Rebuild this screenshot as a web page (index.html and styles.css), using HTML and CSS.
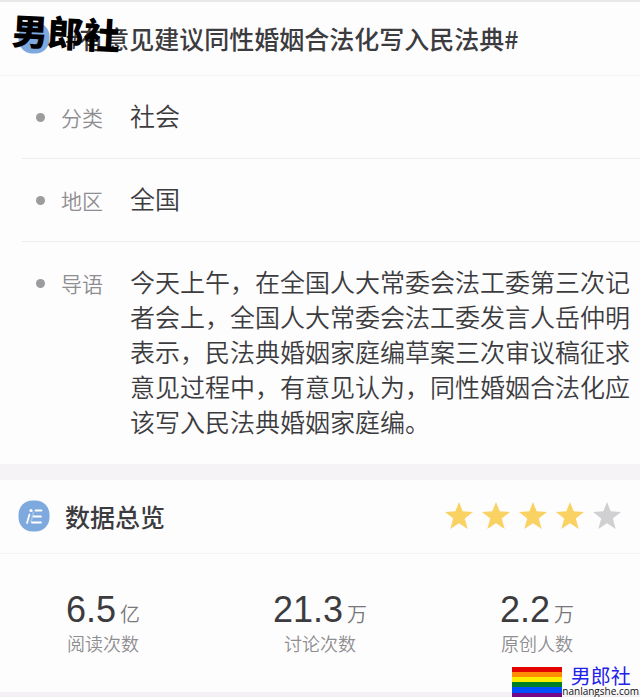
FILE: index.html
```html
<!DOCTYPE html>
<html lang="zh-CN">
<head>
	<meta charset="utf-8">
	<meta name="viewport" content="width=device-width, initial-scale=1">
	<title>#有意见建议同性婚姻合法化写入民法典#</title>
	<link rel="stylesheet" href="styles.css">
</head>
<body>
	<section class="topic">
		<header class="bar">
			<svg class="badge" viewBox="0 0 32 32" aria-hidden="true">
				<rect x=".5" y=".5" width="31" height="31" rx="14" fill="#7da9de"/>
			</svg>
			<h1>#有意见建议同性婚姻合法化写入民法典#</h1>
			<div class="stamp">男郎社</div>
		</header>
		<dl class="facts">
			<div class="fact">
				<dt>分类</dt>
				<dd>社会</dd>
			</div>
			<div class="fact">
				<dt>地区</dt>
				<dd>全国</dd>
			</div>
			<div class="fact">
				<dt>导语</dt>
				<dd>今天上午，在全国人大常委会法工委第三次记者会上，全国人大常委会法工委发言人岳仲明表示，民法典婚姻家庭编草案三次审议稿征求意见过程中，有意见认为，同性婚姻合法化应该写入民法典婚姻家庭编。</dd>
			</div>
		</dl>
	</section>
	<section class="overview">
		<header class="bar">
			<svg class="badge" viewBox="0 0 32 32" aria-hidden="true">
				<rect x=".5" y=".5" width="31" height="31" rx="14" fill="#7da9de"/>
				<g fill="none" stroke="#fff" stroke-width="1.8" stroke-linecap="round">
					<path d="M11.500 14.500L9 23M17.500 10.500h6M15.500 16.500h7.500M14 22.500h9"/>
					<path d="M15.500 12l-2.500 10" stroke-opacity=".3"/>
				</g>
				<circle cx="13" cy="10.500" r="1.600" fill="#fff"/>
			</svg>
			<h2>数据总览</h2>
			<div class="stars" role="img" aria-label="4 / 5">
				<svg viewBox="0 0 28 28"><use href="#star"/></svg>
				<svg viewBox="0 0 28 28"><use href="#star"/></svg>
				<svg viewBox="0 0 28 28"><use href="#star"/></svg>
				<svg viewBox="0 0 28 28"><use href="#star"/></svg>
				<svg class="off" viewBox="0 0 28 28"><path id="star" d="M14 0l3.700 9.300 10.300.6-8.200 6.500 2.900 10.600L14 21.300 5.300 27l2.900-10.600L0 9.900l10.300-.6z"/></svg>
			</div>
		</header>
		<ul class="stats">
			<li><p><b>6.5</b>亿</p><span>阅读次数</span></li>
			<li><p><b>21.3</b>万</p><span>讨论次数</span></li>
			<li><p><b>2.2</b>万</p><span>原创人数</span></li>
		</ul>
	</section>
	<div class="brand">
		<svg class="flag" viewBox="0 0 50 30" aria-hidden="true">
			<path fill="#e40303" d="M0 0h50v5H0z"/>
			<path fill="#ff8c00" d="M0 5h50v5H0z"/>
			<path fill="#ffed00" d="M0 10h50v5H0z"/>
			<path fill="#008026" d="M0 15h50v5H0z"/>
			<path fill="#004dff" d="M0 20h50v6H0z"/>
			<path fill="#750787" d="M0 26h50v4H0z"/>
		</svg>
		<div class="brand-name">
			<strong>男郎社</strong>
			<span>nanlangshe.com</span>
		</div>
	</div>
</body>
</html>
```
FILE: styles.css
```css
* {
	box-sizing: border-box;
	margin: 0;
	padding: 0;
}
body {
	position: relative;
	background: #fefdfe;
	color: #3c3c3e;
	font-family: "Liberation Sans", "Noto Sans CJK SC", sans-serif;
	font-size: 25px;
}
.topic {
	border-top: 2px solid #e8e8e8;
	border-bottom: 16px solid #f5f3f5;
}
.overview {
	border-bottom: 5px solid #f3f1f4;
}
.bar {
	position: relative;
	display: flex;
	align-items: center;
	height: 74px;
	padding: 0 19px 2px 18px;
	border-bottom: 1px solid #f5f4f5;
}
.badge {
	width: 32px;
	height: 32px;
	margin-right: 15px;
}
h1, h2 {
	font-family: "Noto Sans CJK SC", sans-serif;
	font-size: 25px;
	font-weight: 500;
	white-space: nowrap;
}
.stamp {
	position: absolute;
	top: 3px;
	left: 12px;
	color: #000;
	font-family: "Noto Sans CJK SC", sans-serif;
	font-size: 36px;
	font-weight: 900;
	line-height: 52px;
	transform: rotate(3deg);
}
.facts {
	padding-left: 22px;
	font-family: "Noto Sans CJK SC", sans-serif;
	font-weight: 350;
}
.fact {
	display: flex;
	align-items: flex-start;
	padding: 22px 8px 23px 14px;
	border-bottom: 1px solid #eeedee;
	line-height: 35px;
}
.fact:last-child {
	padding-bottom: 25px;
	border-bottom: none;
}
.fact dt {
	display: flex;
	align-items: center;
	flex: none;
	width: 94px;
	padding-top: 2px;
	color: #8e8e90;
	font-size: 21px;
}
.fact dt::before {
	content: "";
	width: 9px;
	height: 9px;
	margin-right: 16px;
	border-radius: 50%;
	background: #9c9b9e;
}
.stars {
	display: flex;
	gap: 9px;
	margin-left: auto;
}
.stars svg {
	width: 28px;
	height: 28px;
	fill: #fad264;
}
.stars .off {
	fill: #d0cfd1;
}
.stats {
	display: flex;
	justify-content: space-between;
	padding: 36px 66px 33px;
	list-style: none;
	text-align: center;
	color: #8e8e90;
	font-size: 18px;
	font-weight: 350;
}
.stats p {
	display: flex;
	align-items: baseline;
	justify-content: center;
	gap: 4px;
	height: 42px;
	color: #77777a;
	font-size: 20px;
	line-height: 40px;
}
.stats b {
	color: #3c3c3e;
	font-size: 36px;
	font-weight: normal;
}
.stats span {
	display: block;
	line-height: 27px;
}
.brand {
	position: absolute;
	right: 1px;
	bottom: 0;
	display: flex;
	align-items: flex-end;
}
.flag {
	width: 50px;
	height: 30px;
}
.brand-name {
	color: #111;
	font-family: "Open Sans", sans-serif;
	font-size: 10px;
	line-height: 12px;
	text-align: center;
}
.brand-name strong {
	display: block;
	color: #2222e8;
	font-family: "Noto Sans CJK SC", sans-serif;
	font-size: 20px;
	font-weight: 400;
	line-height: 18px;
}
.brand-name span {
	display: block;
}
```
